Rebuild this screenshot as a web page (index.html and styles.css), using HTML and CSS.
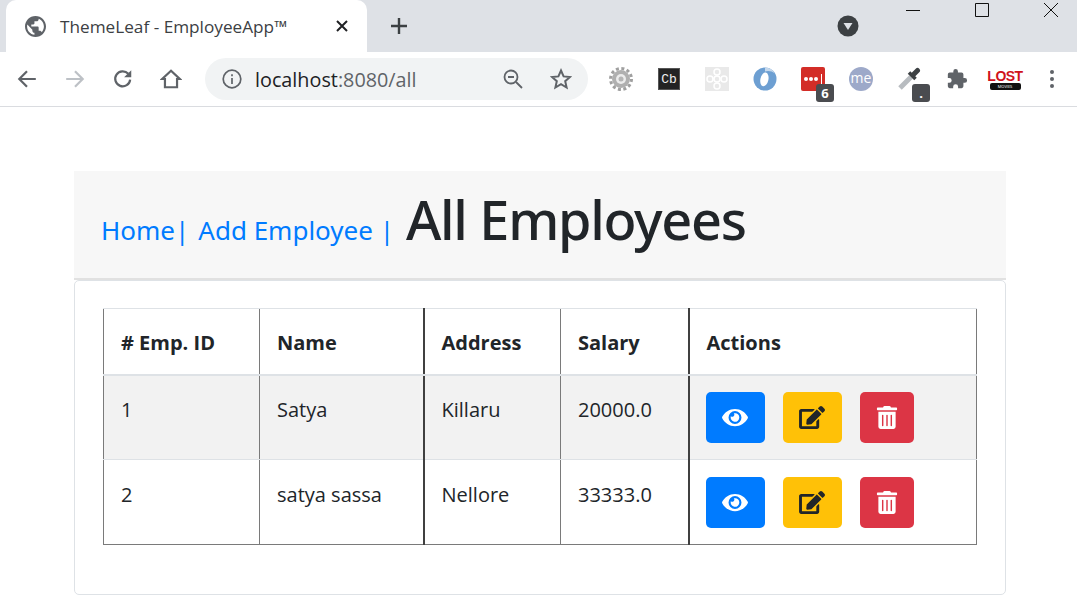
FILE: index.html
```html
<!doctype html>
<html>

<head>
  <meta charset='utf-8'>
  <title>ThemeLeaf - EmployeeApp™</title>
  <link rel="stylesheet" href="styles.css">
</head>

<body>
  <div class='tabstrip'>
    <div class='tab'>
      <svg class='globe' viewBox='2 2 20 20'><path d='M12 2C6.48 2 2 6.48 2 12s4.48 10 10 10 10-4.48 10-10S17.52 2 12 2zm-1 17.93c-3.95-.49-7-3.85-7-7.93 0-.62.08-1.21.21-1.79L9 15v1c0 1.1.9 2 2 2v1.93zm6.9-2.54c-.26-.81-1-1.39-1.9-1.39h-1v-3c0-.55-.45-1-1-1H8v-2h2c.55 0 1-.45 1-1V7h2c1.1 0 2-.9 2-2v-.41c2.93 1.19 5 4.06 5 7.41 0 2.08-.8 3.97-2.1 5.39z'/></svg>
      <span class='tabtitle'>ThemeLeaf - EmployeeApp™</span>
      <svg class='tabclose' viewBox='0 0 12 12'><path d='M1 1l10 10M11 1L1 11'/></svg>
    </div>
    <svg class='newtab' viewBox='0 0 18 18'><path d='M9 1v16M1 9h16'/></svg>
    <svg class='tabsearch' viewBox='0 0 22 22'><circle cx='11' cy='11' r='10.5'/><path d='M6.5 8h9L11 15z'/></svg>
    <div class='winctrls'>
      <svg class='winbtn' viewBox='0 0 16 16'><path d='M1 8.500h14'/></svg>
      <svg class='winbtn' viewBox='0 0 16 16'><path d='M1.500 1.500h13v13h-13z'/></svg>
      <svg class='winbtn' viewBox='0 0 16 16'><path d='M1 1l14 14M15 1L1 15'/></svg>
    </div>
  </div>

  <div class='toolbar'>
    <svg class='navicon' viewBox='0 0 20 20'><path d='M18 10H3M10 3l-7 7 7 7'/></svg>
    <svg class='navicon disabled' viewBox='0 0 20 20'><path d='M2 10h15M10 3l7 7-7 7'/></svg>
    <svg class='navicon' viewBox='0 0 20 20'><path d='M16.500 10.500a6.800 6.800 0 1 1-1.700-5.200'/><path class='solid' d='M17.500 2v6.500H11z'/></svg>
    <svg class='navicon' viewBox='0 0 20 20'><path d='M10 2.500L2 10h2.500v7.500h11V10H18z'/></svg>
    <div class='omnibox'>
      <svg class='infoicon' viewBox='0 0 20 20'><circle cx='10' cy='10' r='8.800'/><path d='M10 9v6M10 5.200v2'/></svg>
      <span class='host'>localhost</span><span class='port'>:8080/all</span>
      <svg class='zoomicon' viewBox='0 0 20 20'><circle cx='8' cy='8' r='6.500'/><path d='M5 8h6M13 13l6 6'/></svg>
      <svg class='staricon' viewBox='0 0 22 22'><path d='M11 2.500l2.600 5.900 6.400.6-4.800 4.200 1.400 6.300-5.600-3.300-5.600 3.300 1.400-6.300L2 9l6.400-.6z'/></svg>
    </div>
    <div class='exts'>
      <svg class='ext' viewBox='0 0 24 24'><circle cx='12' cy='12' r='9' class='gear'/><circle cx='12' cy='12' r='10.500' class='gearteeth'/><circle cx='12' cy='12' r='5' fill='#ececec'/><circle cx='12' cy='12' r='2.500' fill='#b5b5b5'/></svg>
      <div class='ext cb'>Cb</div>
      <svg class='ext' viewBox='0 0 24 24'><rect width='24' height='24' fill='#e9e9e9'/><g fill='none' stroke='#fff' stroke-width='1.500'><circle cx='12' cy='12' r='3'/><circle cx='12' cy='5' r='3'/><circle cx='12' cy='19' r='3'/><circle cx='5' cy='12' r='3'/><circle cx='19' cy='12' r='3'/></g></svg>
      <svg class='ext' viewBox='0 0 24 24'><circle cx='12' cy='12' r='11.500' fill='#6d9fd2'/><path d='M12 .5a11.500 11.500 0 0 1 10 6c-3-3-8-3-10-2z' fill='#c5d8ec'/><ellipse cx='11.500' cy='12.500' rx='4' ry='7' fill='#fff' transform='rotate(12 12 12)'/></svg>
      <div class='ext badged'>
        <div class='lastpass'><i></i><i></i><i></i><b></b></div>
        <span class='badge'>6</span>
      </div>
      <div class='ext me'>me</div>
      <div class='ext badged'>
        <svg class='dropper' viewBox='0 0 24 24'><path d='M3 21L14 10' stroke='#b8bcc0' stroke-width='5'/><path d='M12 5.500l6.500 6.500' stroke='#3c4043' stroke-width='3.500'/><path d='M16 8l4.500-4.500' stroke='#3c4043' stroke-width='5' stroke-linecap='round'/></svg>
        <span class='badge'>.</span>
      </div>
      <svg class='ext puzzle' viewBox='0 0 24 24'><path d='M20.500 11H19V7a2 2 0 0 0-2-2h-4V3.500a2.500 2.500 0 0 0-5 0V5H4a2 2 0 0 0-2 2v3.800h1.500a2.700 2.700 0 0 1 0 5.400H2V20a2 2 0 0 0 2 2h3.800v-1.500a2.700 2.700 0 0 1 5.400 0V22H17a2 2 0 0 0 2-2v-4h1.500a2.500 2.500 0 0 0 0-5z'/></svg>
      <div class='ext lost'><span class='lostword'>LOST</span><span class='lostbar'>MOVIES</span></div>
      <svg class='menuicon' viewBox='0 0 4 18'><circle cx='2' cy='2' r='2'/><circle cx='2' cy='9' r='2'/><circle cx='2' cy='16' r='2'/></svg>
    </div>
  </div>

  <div class='page'>
    <div class='cardhead'>
      <a class='navlink home'>Home|</a>
      <a class='navlink'>Add Employee |</a>
      <h1>All Employees</h1>
    </div>
    <div class='cardbody'>
      <table>
        <colgroup>
          <col class='c1'><col class='c2'><col class='c3'><col class='c4'><col class='c5'>
        </colgroup>
        <thead>
          <tr><th># Emp. ID</th><th>Name</th><th class='dark'>Address</th><th>Salary</th><th class='dark'>Actions</th></tr>
        </thead>
        <tbody>
          <tr class='odd'>
            <td>1</td><td>Satya</td><td class='dark'>Killaru</td><td>20000.0</td>
            <td class='dark'>
              <div class='actions'>
                <a class='btn blue'><svg viewBox='0 0 576 512'><path d='M572.52 241.4C518.29 135.59 410.93 64 288 64S57.68 135.64 3.48 241.41a32.35 32.35 0 0 0 0 29.19C57.71 376.41 165.07 448 288 448s230.32-71.64 284.52-177.41a32.35 32.35 0 0 0 0-29.19zM288 400a144 144 0 1 1 144-144 143.93 143.93 0 0 1-144 144zm0-240a95.31 95.31 0 0 0-25.31 3.79 47.85 47.85 0 0 1-66.9 66.9A95.78 95.78 0 1 0 288 160z'/></svg></a>
                <a class='btn yellow'><svg viewBox='0 0 576 512'><path d='M402.6 83.2l90.2 90.2c3.8 3.8 3.8 10 0 13.8L274.4 405.6l-92.8 10.3c-12.4 1.4-22.9-9.1-21.5-21.5l10.3-92.8L388.8 83.2c3.8-3.8 10-3.8 13.8 0zm162-22.9l-48.8-48.8c-15.2-15.2-39.9-15.2-55.2 0l-35.4 35.4c-3.8 3.8-3.8 10 0 13.8l90.2 90.2c3.8 3.8 10 3.8 13.8 0l35.4-35.4c15.2-15.3 15.2-40 0-55.2zM384 346.2V448H64V128h229.8c3.2 0 6.2-1.3 8.5-3.500l40-40c7.600-7.600 2.200-20.500-8.500-20.500H48C21.500 64 0 85.500 0 112v352c0 26.500 21.500 48 48 48h352c26.500 0 48-21.500 48-48V306.200c0-10.700-12.900-16-20.500-8.500l-40 40c-2.200 2.300-3.500 5.300-3.500 8.500z'/></svg></a>
                <a class='btn red'><svg viewBox='0 0 448 512'><path d='M32 464a48 48 0 0 0 48 48h288a48 48 0 0 0 48-48V128H32zm272-256a16 16 0 0 1 32 0v224a16 16 0 0 1-32 0zm-96 0a16 16 0 0 1 32 0v224a16 16 0 0 1-32 0zm-96 0a16 16 0 0 1 32 0v224a16 16 0 0 1-32 0zM432 32H312l-9.400-18.700A24 24 0 0 0 281.100 0H166.800a23.720 23.720 0 0 0-21.400 13.300L136 32H16A16 16 0 0 0 0 48v32a16 16 0 0 0 16 16h416a16 16 0 0 0 16-16V48a16 16 0 0 0-16-16z'/></svg></a>
              </div>
            </td>
          </tr>
          <tr>
            <td>2</td><td>satya sassa</td><td class='dark'>Nellore</td><td>33333.0</td>
            <td class='dark'>
              <div class='actions'>
                <a class='btn blue'><svg viewBox='0 0 576 512'><path d='M572.52 241.4C518.29 135.59 410.93 64 288 64S57.68 135.64 3.48 241.41a32.35 32.35 0 0 0 0 29.19C57.71 376.41 165.07 448 288 448s230.32-71.64 284.52-177.41a32.35 32.35 0 0 0 0-29.19zM288 400a144 144 0 1 1 144-144 143.93 143.93 0 0 1-144 144zm0-240a95.31 95.31 0 0 0-25.31 3.79 47.85 47.85 0 0 1-66.9 66.9A95.78 95.78 0 1 0 288 160z'/></svg></a>
                <a class='btn yellow'><svg viewBox='0 0 576 512'><path d='M402.6 83.2l90.2 90.2c3.8 3.8 3.8 10 0 13.8L274.4 405.6l-92.8 10.3c-12.4 1.4-22.9-9.1-21.5-21.5l10.3-92.8L388.8 83.2c3.8-3.8 10-3.8 13.8 0zm162-22.9l-48.8-48.8c-15.2-15.2-39.9-15.2-55.2 0l-35.4 35.4c-3.8 3.8-3.8 10 0 13.8l90.2 90.2c3.8 3.8 10 3.8 13.8 0l35.4-35.4c15.2-15.3 15.2-40 0-55.2zM384 346.2V448H64V128h229.8c3.2 0 6.2-1.3 8.5-3.500l40-40c7.600-7.600 2.200-20.500-8.500-20.500H48C21.500 64 0 85.500 0 112v352c0 26.500 21.500 48 48 48h352c26.500 0 48-21.500 48-48V306.200c0-10.700-12.900-16-20.500-8.500l-40 40c-2.200 2.300-3.500 5.300-3.500 8.500z'/></svg></a>
                <a class='btn red'><svg viewBox='0 0 448 512'><path d='M32 464a48 48 0 0 0 48 48h288a48 48 0 0 0 48-48V128H32zm272-256a16 16 0 0 1 32 0v224a16 16 0 0 1-32 0zm-96 0a16 16 0 0 1 32 0v224a16 16 0 0 1-32 0zm-96 0a16 16 0 0 1 32 0v224a16 16 0 0 1-32 0zM432 32H312l-9.400-18.700A24 24 0 0 0 281.100 0H166.800a23.720 23.720 0 0 0-21.400 13.300L136 32H16A16 16 0 0 0 0 48v32a16 16 0 0 0 16 16h416a16 16 0 0 0 16-16V48a16 16 0 0 0-16-16z'/></svg></a>
              </div>
            </td>
          </tr>
        </tbody>
      </table>
    </div>
  </div>
</body>

</html>
```

FILE: styles.css
```css
* {
  margin: 0;
  padding: 0;
  box-sizing: border-box;
}
html, body {
  height: 100%;
  overflow: hidden;
}
body {
  background: #fff;
  color: #212529;
  font-family: "Open Sans", "Noto Sans", sans-serif;
}

/* browser chrome */
.tabstrip {
  display: flex;
  align-items: flex-start;
  height: 52px;
  background: #dee1e6;
}
.tab {
  display: flex;
  align-items: center;
  width: 361px;
  height: 52px;
  margin-left: 6px;
  padding: 0 16px 0 19px;
  background: #fff;
  border-radius: 10px 10px 0 0;
}
.globe {
  width: 21px;
  height: 21px;
  fill: #5f6368;
}
.tabtitle {
  flex: 1;
  margin-left: 14px;
  font-size: 17.200px;
  color: #3c4043;
}
.tabclose {
  width: 12px;
  height: 12px;
  fill: none;
  stroke: #202124;
  stroke-width: 2;
  margin-right: 3px;
}
.newtab {
  width: 18px;
  height: 18px;
  margin: 17px 0 0 23px;
  fill: none;
  stroke: #3c4043;
  stroke-width: 2.400;
}
.tabsearch {
  width: 22px;
  height: 22px;
  margin: 15px 0 0 429px;
  fill: #3c4043;
}
.tabsearch path {
  fill: #dee1e6;
}
.winctrls {
  display: flex;
  gap: 53px;
  margin: 2px 0 0 46px;
}
.winbtn {
  width: 16px;
  height: 16px;
  fill: none;
  stroke: #111;
  stroke-width: 1;
}
.toolbar {
  display: flex;
  align-items: center;
  height: 55px;
  padding: 0 16px 0 16px;
  border-bottom: 1px solid #dadce0;
}
.navicon {
  width: 22px;
  height: 22px;
  margin-right: 26px;
  fill: none;
  stroke: #5f6368;
  stroke-width: 2;
}
.navicon.disabled {
  stroke: #bdc1c6;
}
.navicon .solid {
  fill: #5f6368;
  stroke: none;
}
.omnibox {
  display: flex;
  align-items: center;
  width: 383px;
  height: 42px;
  margin-left: -3px;
  padding: 0 16px 0 17px;
  background: #f1f3f4;
  border-radius: 21px;
  font-size: 19.800px;
}
.infoicon {
  width: 20px;
  height: 20px;
  margin-right: 13px;
  fill: none;
  stroke: #5f6368;
  stroke-width: 1.700;
}
.host {
  color: #202124;
}
.port {
  flex: 1;
  color: #5f6368;
}
.zoomicon {
  width: 20px;
  height: 20px;
  fill: none;
  stroke: #5f6368;
  stroke-width: 1.800;
  margin-right: 27px;
}
.staricon {
  width: 22px;
  height: 22px;
  fill: none;
  stroke: #5f6368;
  stroke-width: 2;
}
.exts {
  flex: 1;
  display: flex;
  align-items: center;
  gap: 24px;
  margin-left: 21px;
}
.ext {
  flex: none;
  position: relative;
  width: 24px;
  height: 24px;
}
.gear {
  fill: #b0b0b0;
}
.gearteeth {
  fill: none;
  stroke: #a0a0a0;
  stroke-width: 3;
  stroke-dasharray: 3 2.500;
}
.cb {
  display: flex;
  align-items: center;
  justify-content: center;
  width: 22px;
  height: 22px;
  margin: 0 1px;
  background: #232323;
  border: 1px solid #555;
  color: #eee;
  font-family: "Liberation Mono", monospace;
  font-size: 13px;
}
.lastpass {
  display: flex;
  align-items: center;
  gap: 1px;
  width: 24px;
  height: 24px;
  padding-left: 3px;
  background: #d32d27;
  border-radius: 2px;
}
.lastpass i {
  width: 4px;
  height: 4px;
  background: #fff;
  border-radius: 50%;
}
.lastpass b {
  width: 1px;
  height: 10px;
  margin-left: 2px;
  background: #fff;
}
/* badge sits over the extension icon */
.badge {
  position: absolute;
  left: 15px;
  top: 17px;
  width: 18px;
  height: 18px;
  background: #4a4c50;
  border-radius: 3px;
  color: #fff;
  font-size: 13px;
  font-weight: 700;
  line-height: 18px;
  text-align: center;
}
.me {
  background: #9da9c9;
  border-radius: 50%;
  color: #fff;
  font-size: 14px;
  line-height: 22px;
  text-align: center;
}
.dropper {
  display: block;
  width: 24px;
  height: 24px;
  fill: none;
}
.puzzle {
  width: 22px;
  height: 22px;
  margin: 0 1px;
  fill: #5f6368;
}
.lost {
  display: flex;
  flex-direction: column;
  align-items: center;
  justify-content: center;
  width: 30px;
  margin: 0 -3px;
}
.lostword {
  color: #d0121b;
  font-family: "Liberation Sans", sans-serif;
  font-size: 14px;
  font-weight: 700;
  letter-spacing: -0.5px;
  line-height: 14px;
}
.lostbar {
  width: 31px;
  height: 7px;
  background: #111;
  border-radius: 2px;
  color: #fff;
  font-size: 4px;
  line-height: 7px;
  text-align: center;
}
.menuicon {
  width: 4px;
  height: 18px;
  margin-left: 9px;
  fill: #5f6368;
}

/* page */
.page {
  width: 932px;
  margin: 64px 0 0 74px;
}
.cardhead {
  display: flex;
  align-items: baseline;
  height: 109px;
  padding: 16px 28px 0 27px;
  background: #f7f7f7;
  border-bottom: 2px solid #e1e1e1;
}
.navlink {
  margin-right: 12px;
  color: #007bff;
  font-family: "Noto Sans", sans-serif;
  font-size: 26px;
}
.home {
  margin-right: 9px;
}
h1 {
  font-family: "Noto Sans", sans-serif;
  font-size: 54px;
  font-weight: 500;
  letter-spacing: -1.300px;
  line-height: 64px;
}
.cardbody {
  height: 315px;
  padding: 27px 28px;
  border: 1px solid #dee2e6;
  border-radius: 5px;
}
table {
  width: 873px;
  table-layout: fixed;
  border-collapse: collapse;
  border-bottom: 1px solid #7a7a7a;
  border-right: 1px solid #7a7a7a;
  font-size: 20px;
}
.c1 { width: 156px; }
.c2 { width: 164px; }
.c3 { width: 137px; }
.c4 { width: 128px; }
.c5 { width: 288px; }
th, td {
  padding: 0 0 0 17px;
  border-left: 1px solid #7a7a7a;
  text-align: left;
}
th.dark, td.dark {
  border-left: 2px solid #404040;
}
th {
  height: 66px;
  padding-top: 2px;
  border-top: 1px solid #dee2e6;
  border-bottom: 2px solid #dee2e6;
  font-weight: 700;
}
td {
  height: 85px;
  padding-bottom: 16px;
  border-bottom: 1px solid #dee2e6;
}
tbody tr:last-child td {
  border-bottom: 1px solid #7a7a7a;
}
.odd {
  background: #f2f2f2;
}
.actions {
  display: flex;
  gap: 18px;
  margin-left: -1px;
  padding-top: 16px;
}
.btn {
  display: flex;
  align-items: center;
  justify-content: center;
  width: 59px;
  height: 51px;
  border-radius: 5px;
}
.btn svg {
  height: 23px;
  width: 26px;
}
.blue {
  background: #007bff;
  fill: #fff;
}
.yellow {
  background: #ffc107;
  fill: #212529;
}
.red {
  width: 54px;
  background: #dc3545;
  fill: #fff;
}
```
